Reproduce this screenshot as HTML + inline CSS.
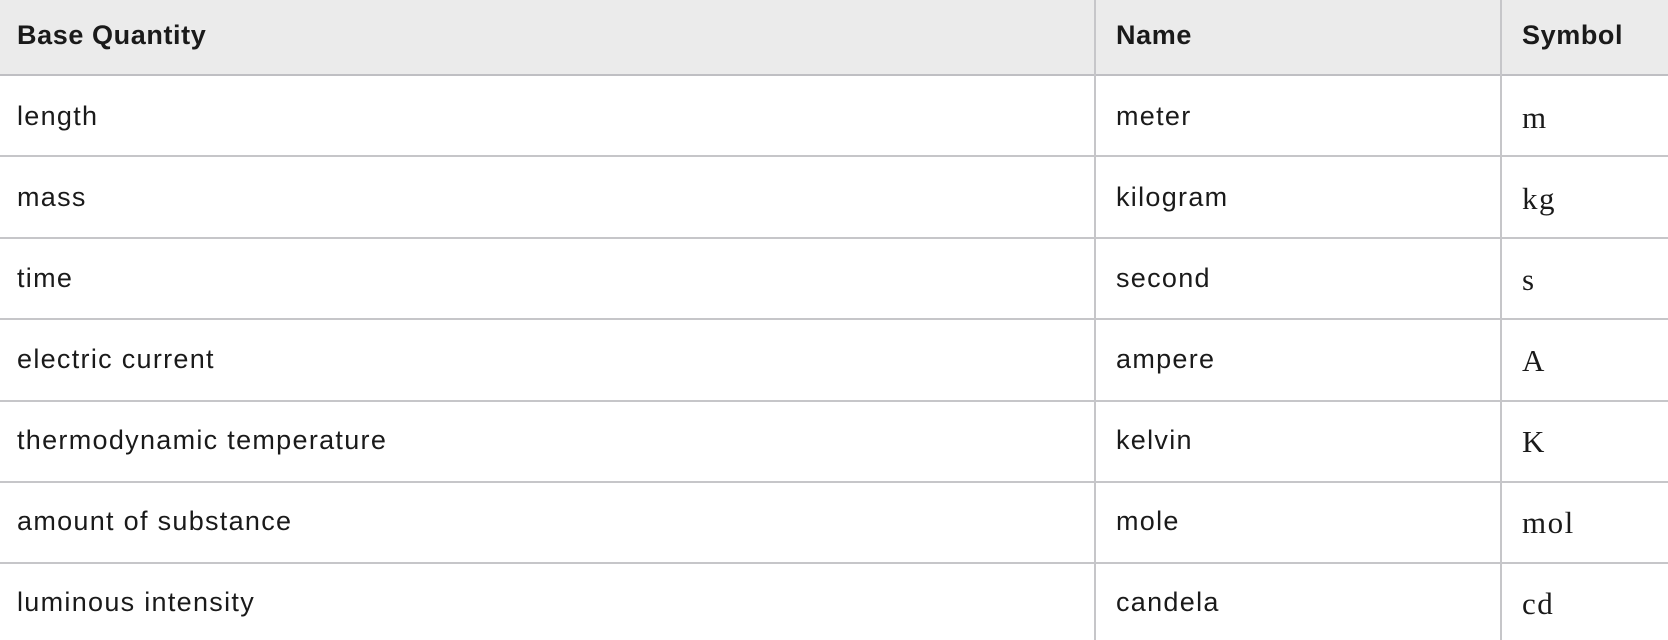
<!DOCTYPE html>
<html><head><style>
html,body{margin:0;padding:0;background:#fff;}
body{width:1668px;height:640px;overflow:hidden;font-family:"Liberation Sans",sans-serif;color:#1a1a1a;}
.h{position:absolute;left:0;top:0;width:1668px;height:76px;background:#ebebeb;border-bottom:2px solid #bfbfc3;box-sizing:border-box;}
.line{position:absolute;left:0;width:1668px;height:2px;background:#c6c6c9;}
.v{position:absolute;top:0;height:640px;width:2px;background:#c6c6c9;}
.c{position:absolute;font-size:27px;white-space:nowrap;letter-spacing:1.3px;margin-top:-1px;}
.b{font-weight:bold;letter-spacing:0.6px;}
.s{font-family:"Liberation Serif","DejaVu Serif",serif;font-size:31px;letter-spacing:1.5px;margin-top:0;}
</style></head><body>
<div class="h"></div>
<div class="line" style="top:155px"></div>
<div class="line" style="top:237px"></div>
<div class="line" style="top:318px"></div>
<div class="line" style="top:400px"></div>
<div class="line" style="top:481px"></div>
<div class="line" style="top:562px"></div>
<div class="v" style="left:1094px"></div>
<div class="v" style="left:1500px"></div>

<div class="c b" style="left:17px;top:21px">Base Quantity</div>
<div class="c b" style="left:1116px;top:21px">Name</div>
<div class="c b" style="left:1522px;top:21px">Symbol</div>

<div class="c" style="left:17px;top:102px">length</div>
<div class="c" style="left:1116px;top:102px">meter</div>
<div class="c s" style="left:1522px;top:100px">m</div>

<div class="c" style="left:17px;top:183px">mass</div>
<div class="c" style="left:1116px;top:183px">kilogram</div>
<div class="c s" style="left:1522px;top:181px">kg</div>

<div class="c" style="left:17px;top:264px">time</div>
<div class="c" style="left:1116px;top:264px">second</div>
<div class="c s" style="left:1522px;top:262px">s</div>

<div class="c" style="left:17px;top:345px">electric current</div>
<div class="c" style="left:1116px;top:345px">ampere</div>
<div class="c s" style="left:1522px;top:343px">A</div>

<div class="c" style="left:17px;top:426px">thermodynamic temperature</div>
<div class="c" style="left:1116px;top:426px">kelvin</div>
<div class="c s" style="left:1522px;top:424px">K</div>

<div class="c" style="left:17px;top:507px">amount of substance</div>
<div class="c" style="left:1116px;top:507px">mole</div>
<div class="c s" style="left:1522px;top:505px">mol</div>

<div class="c" style="left:17px;top:588px">luminous intensity</div>
<div class="c" style="left:1116px;top:588px">candela</div>
<div class="c s" style="left:1522px;top:586px">cd</div>
</body></html>
